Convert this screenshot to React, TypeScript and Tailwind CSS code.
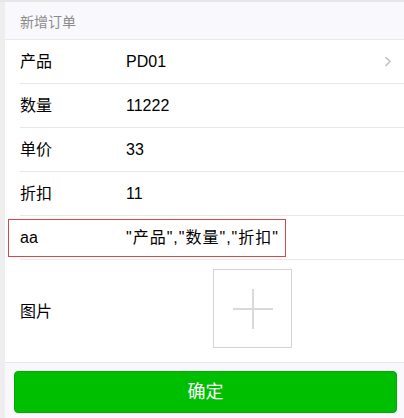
import React from 'react';

const FONT = { fontFamily: '"Liberation Sans", "Noto Sans CJK SC", sans-serif' };

const rows = [
  { label: '产品', value: 'PD01', arrow: true },
  { label: '数量', value: '11222' },
  { label: '单价', value: '33' },
  { label: '折扣', value: '11' },
];

const Chevron = () => (
  <svg width="8" height="11" viewBox="0 0 8 11" fill="none" className="mr-[12px]">
    <path d="M1.5 1.2 L6 5.5 L1.5 9.8" stroke="#c4c4c4" strokeWidth="1.6" />
  </svg>
);

export default function App() {
  return (
    <div className="flex h-[418px] w-full border-t-2 border-[#e6e6e6] bg-[#f9f8fc]" style={FONT}>
      <div className="w-[5px] shrink-0 bg-[#eeeeee]" />
      <div className="flex flex-1 flex-col">
        {/* header */}
        <div className="flex h-[38px] items-center border-b border-[#e8e8ee] pl-[15px] pt-[4px] text-[14px] text-[#8c8c8c]">
          新增订单
        </div>

        <div className="bg-white">
          {rows.map((r) => (
            <div key={r.label} className="h-[44px] pl-[15px]">
              <div className="flex h-full items-center border-b border-[#e8e8e8] text-[16px] text-black">
                <span className="w-[106px]">{r.label}</span>
                <span className="flex-1">{r.value}</span>
                {r.arrow && <Chevron />}
              </div>
            </div>
          ))}

          {/* focused row */}
          <div className="h-[44px] pl-[15px]">
            <div className="flex h-full items-center border-b border-[#e8e8e8]">
              <div className="-ml-[12px] flex h-[38px] w-[278px] items-center border border-[#d94848] pl-[11px] text-[16px] text-black">
                <span className="w-[106px] shrink-0">aa</span>
                <span className="whitespace-nowrap tracking-[1px]">"产品","数量","折扣"</span>
              </div>
            </div>
          </div>

          {/* image row */}
          <div className="flex h-[102px] items-start pl-[15px]">
            <span className="mt-[40px] w-[193px] text-[16px] text-black">图片</span>
            <div className="mt-[9px] flex h-[79px] w-[79px] items-center justify-center border border-[#d4d4d4]">
              <svg width="40" height="40" viewBox="0 0 40 40">
                <rect x="0" y="19" width="40" height="2" fill="#d9d9d9" />
                <rect x="19" y="0" width="2" height="40" fill="#d9d9d9" />
              </svg>
            </div>
          </div>
        </div>

        {/* footer */}
        <div className="flex-1 border-t border-[#e6e6ea] pl-[9px] pr-[7px] pt-[8px]">
          <button className="flex h-[42px] w-full items-center justify-center rounded-[4px] border border-[#06a806] bg-[#00bf00] text-[18px] text-white">
            确定
          </button>
        </div>
      </div>
    </div>
  );
}
